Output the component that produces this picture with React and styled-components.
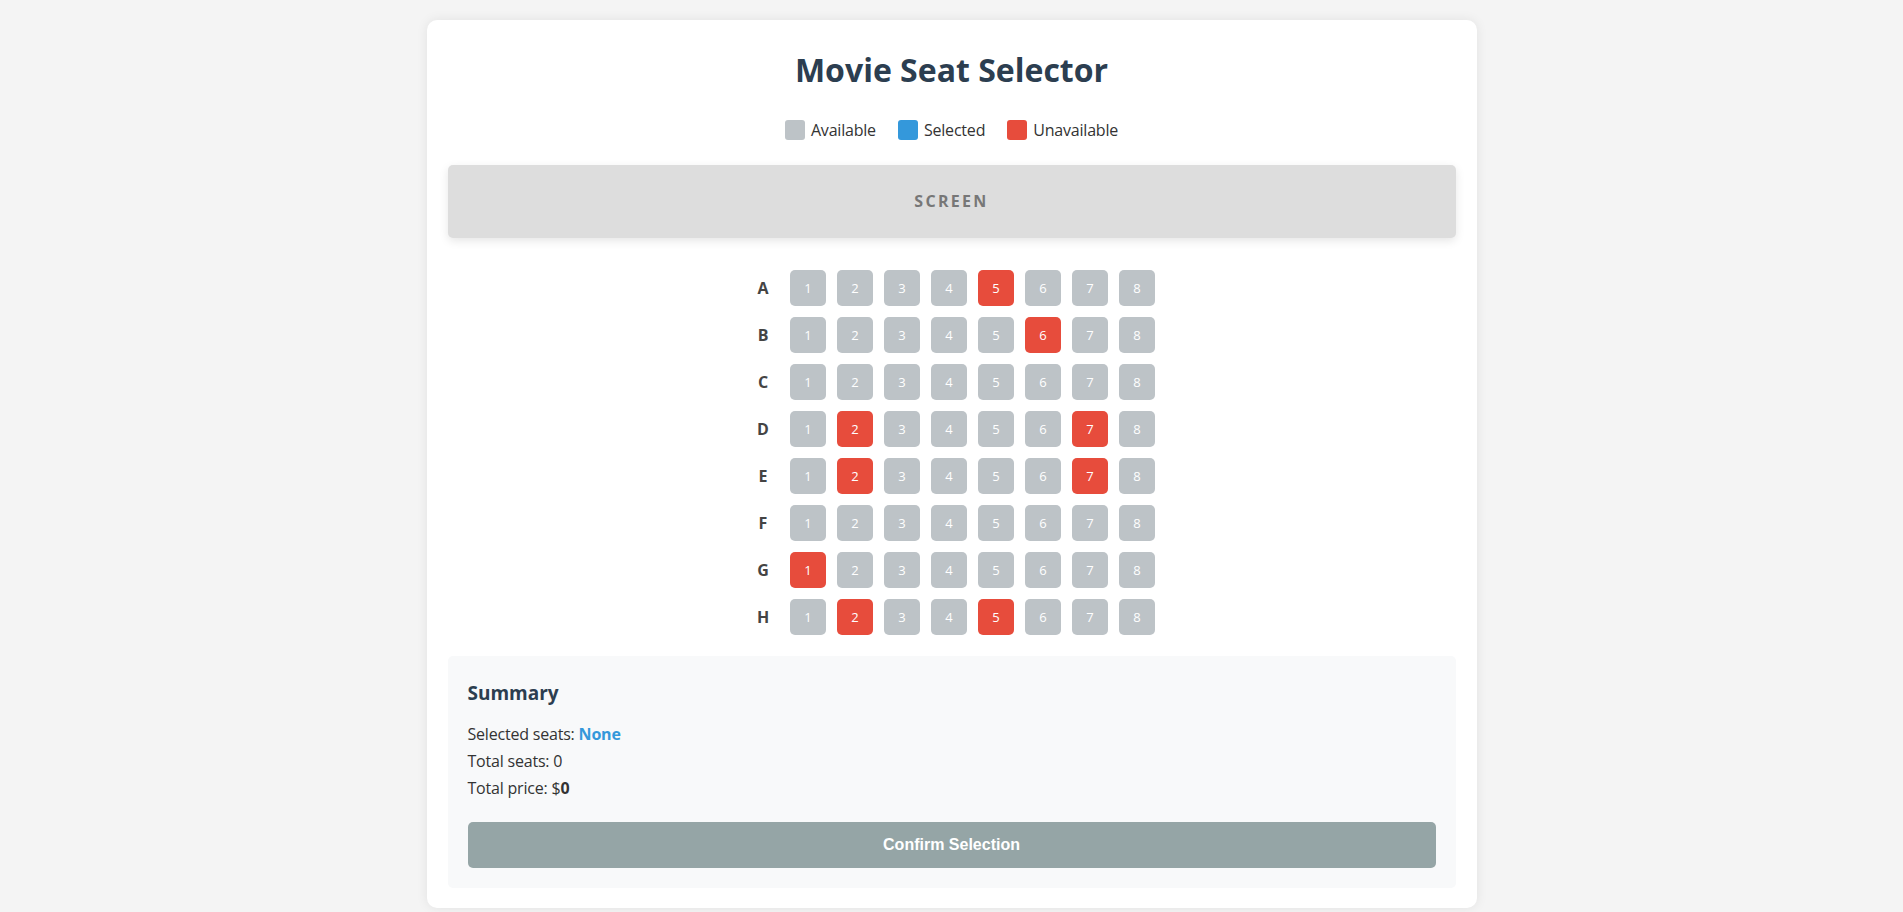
import { useState } from "react";
import styled, { createGlobalStyle } from "styled-components";

const GlobalStyle = createGlobalStyle`
  html, body {
    margin: 0;
    overflow: hidden;
  }
  body {
    background-color: #f4f4f4;
    font-family: "Open Sans", "Noto Sans", sans-serif;
    color: #333;
  }
`;

const Page = styled.div`
  padding: 20px;
`;

const Card = styled.div`
  max-width: 1050px;
  margin: 0 auto;
  box-sizing: border-box;
  padding: 20px 21px;
  background-color: #fff;
  border-radius: 10px;
  box-shadow: 0 0 12px rgba(0, 0, 0, 0.08);
`;

const Title = styled.h1`
  margin: 8px 0 28px;
  font-size: 32px;
  font-weight: 700;
  text-align: center;
  color: #2c3e50;
`;

const Legend = styled.div`
  display: flex;
  justify-content: center;
  align-items: center;
  gap: 22px;
  margin-bottom: 24px;
`;

const LegendItem = styled.div`
  display: flex;
  align-items: center;
  gap: 6px;
  font-size: 16px;
  line-height: 22px;
  letter-spacing: -0.2px;
`;

const Swatch = styled.span`
  width: 20px;
  height: 20px;
  border-radius: 3px;
  background-color: ${props => props.color};
`;

const Screen = styled.div`
  padding: 26px 0;
  line-height: 21px;
  background-color: #ddd;
  border-radius: 5px;
  box-shadow: 0 3px 10px rgba(0, 0, 0, 0.1);
  text-align: center;
  font-size: 16px;
  font-weight: 700;
  letter-spacing: 2.3px;
  color: #777;
`;

const SeatMap = styled.div`
  display: flex;
  flex-direction: column;
  align-items: center;
  gap: 11px;
  margin: 32px 0 21px;
`;

const Row = styled.div`
  display: flex;
  align-items: center;
  gap: 11px;
`;

const RowLabel = styled.span`
  width: 30px;
  margin-right: 1px;
  text-align: center;
  font-size: 16px;
  font-weight: 700;
  color: #444;
`;

const seatColors = {
  available: "#bdc3c7",
  selected: "#3498db",
  unavailable: "#e74c3c",
};

const Seat = styled.button`
  width: 36px;
  height: 36px;
  padding: 0;
  border: none;
  border-radius: 5px;
  background-color: ${props => seatColors[props.status]};
  color: #fff;
  font-family: "Open Sans", "Noto Sans", sans-serif;
  font-size: 13px;
  cursor: ${props => (props.status === "unavailable" ? "not-allowed" : "pointer")};
`;

const Summary = styled.div`
  padding: 20px;
  background-color: #f8f9fa;
  border-radius: 5px;
`;

const SummaryTitle = styled.h3`
  margin: 5px 0 20px;
  font-size: 19px;
  font-weight: 700;
  line-height: 24px;
  color: #2c3e50;
`;

const Line = styled.p`
  margin: 8px 0;
  font-size: 16px;
  line-height: 19px;
  letter-spacing: -0.2px;
`;

const Highlight = styled.span`
  font-weight: 700;
  color: #3498db;
`;

const ConfirmButton = styled.button`
  display: block;
  width: 100%;
  height: 46px;
  margin-top: 24px;
  border: none;
  border-radius: 5px;
  background-color: ${props => (props.disabled ? "#95a5a6" : "#2ecc71")};
  color: #fff;
  font-family: "Liberation Sans", Arial, sans-serif;
  font-size: 16px;
  font-weight: 700;
`;

const ROWS = ["A", "B", "C", "D", "E", "F", "G", "H"];
const SEATS_PER_ROW = 8;
const PRICE = 12;
const TAKEN = ["A5", "B6", "D2", "D7", "E2", "E7", "G1", "H2", "H5"];

const App = () => {
  const [selected, setSelected] = useState([]);

  const toggle = id => {
    if (TAKEN.includes(id)) return;
    setSelected(prev =>
      prev.includes(id) ? prev.filter(s => s !== id) : [...prev, id]
    );
  };

  const statusOf = id => {
    if (TAKEN.includes(id)) return "unavailable";
    if (selected.includes(id)) return "selected";
    return "available";
  };

  return (
    <Page>
      <GlobalStyle />
      <Card>
        <Title>Movie Seat Selector</Title>

        <Legend>
          <LegendItem>
            <Swatch color={seatColors.available} />
            Available
          </LegendItem>
          <LegendItem>
            <Swatch color={seatColors.selected} />
            Selected
          </LegendItem>
          <LegendItem>
            <Swatch color={seatColors.unavailable} />
            Unavailable
          </LegendItem>
        </Legend>

        <Screen>SCREEN</Screen>

        <SeatMap>
          {ROWS.map(row => (
            <Row key={row}>
              <RowLabel>{row}</RowLabel>
              {Array.from({ length: SEATS_PER_ROW }, (_, i) => {
                const id = `${row}${i + 1}`;
                return (
                  <Seat key={id} status={statusOf(id)} onClick={() => toggle(id)}>
                    {i + 1}
                  </Seat>
                );
              })}
            </Row>
          ))}
        </SeatMap>

        <Summary>
          <SummaryTitle>Summary</SummaryTitle>
          <Line>
            Selected seats: <Highlight>{selected.length ? selected.join(", ") : "None"}</Highlight>
          </Line>
          <Line>Total seats: {selected.length}</Line>
          <Line>
            Total price: $<strong>{selected.length * PRICE}</strong>
          </Line>
          <ConfirmButton disabled={selected.length === 0}>Confirm Selection</ConfirmButton>
        </Summary>
      </Card>
    </Page>
  );
};

export default App;
